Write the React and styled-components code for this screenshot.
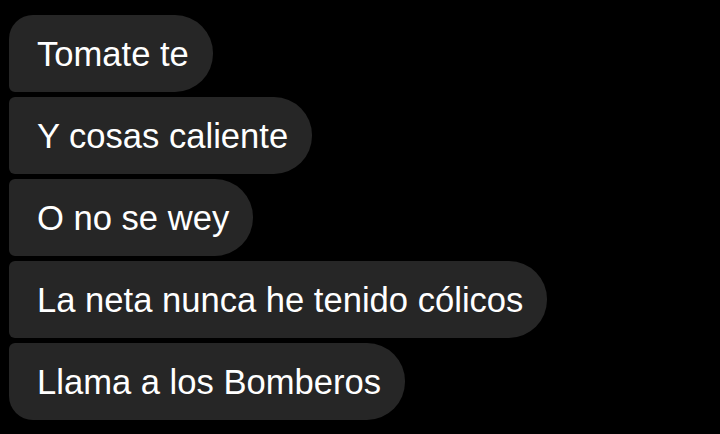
import React from 'react'
import styled, { createGlobalStyle } from 'styled-components'

const GlobalStyle = createGlobalStyle`
  html, body {
    margin: 0;
    padding: 0;
    background: #000;
  }
  body {
    font-family: "Liberation Sans", Arial, sans-serif;
  }
`

const Thread = styled.div`
  width: 720px;
  height: 434px;
  box-sizing: border-box;
  padding: 15px 0 0 9px;
  display: flex;
  flex-direction: column;
  align-items: flex-start;
  gap: 5px;
  background: #000;
  overflow: hidden;
`

const Bubble = styled.div`
  height: 77px;
  box-sizing: border-box;
  padding: 1px 24px 0 28px;
  display: flex;
  align-items: center;
  background: #262626;
  color: #fff;
  font-size: 34.6px;
  white-space: nowrap;
  border-radius: 38px;
  border-top-left-radius: ${p => (p.$first ? '24px' : '6px')};
  border-bottom-left-radius: ${p => (p.$last ? '24px' : '6px')};
`

const messages = [
  'Tomate te',
  'Y cosas caliente',
  'O no se wey',
  'La neta nunca he tenido cólicos',
  'Llama a los Bomberos',
]

const App = () => {
  return (
    <>
      <GlobalStyle />
      <Thread>
        {messages.map((m, i) => (
          <Bubble key={i} $first={i === 0} $last={i === messages.length - 1}>
            {m}
          </Bubble>
        ))}
      </Thread>
    </>
  )
}

export default App
